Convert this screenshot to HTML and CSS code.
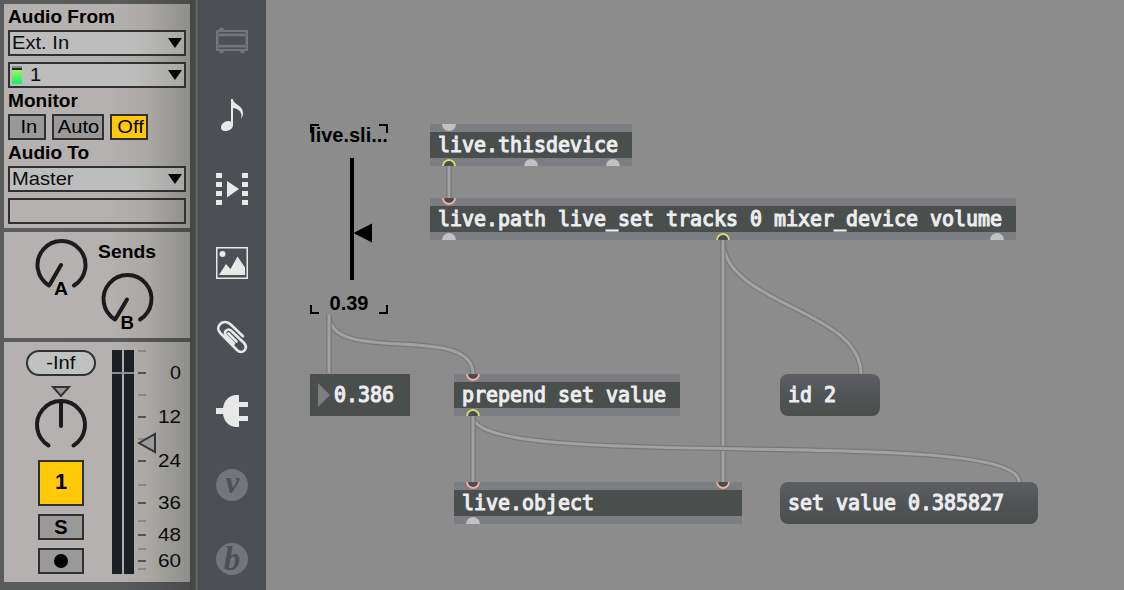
FILE: index.html
```html
<!DOCTYPE html>
<html lang="en">
<head>
<meta charset="utf-8">
<title>Live device patch</title>
<link rel="stylesheet" href="styles.css">
</head>
<body>
<div class="app">
  <aside class="track">
    <section class="panel routing">
      <h2 class="heading"><span class="wide-b">Audio From</span></h2>
      <div class="select"><span class="wide">Ext. In</span><i class="caret"></i></div>
      <div class="select second"><i class="level"></i><span class="wide">1</span><i class="caret"></i></div>
      <h2 class="heading"><span class="wide-b">Monitor</span></h2>
      <div class="monitor">
        <button class="toggle m-in"><span class="wide-c">In</span></button>
        <button class="toggle m-auto"><span class="wide-c">Auto</span></button>
        <button class="toggle m-off on"><span class="wide-c">Off</span></button>
      </div>
      <h2 class="heading"><span class="wide-b">Audio To</span></h2>
      <div class="select"><span class="wide">Master</span><i class="caret"></i></div>
      <div class="select second blank"></div>
    </section>
    <section class="panel sends">
      <svg width="186" height="106" viewBox="4 232 186 106">
        <g class="knob">
          <path d="M49 285.5A24 24 0 1 1 74 285.5M61 265L49.5 285"/>
          <path d="M115 319.5A24 24 0 1 1 140 319.5M127 299.5L115.500 319"/>
        </g>
        <g class="bold">
          <text x="98" y="257.500" textLength="58" lengthAdjust="spacingAndGlyphs">Sends</text>
          <text x="54" y="295" textLength="14" lengthAdjust="spacingAndGlyphs">A</text>
          <text x="120.500" y="329" textLength="13.500" lengthAdjust="spacingAndGlyphs">B</text>
        </g>
      </svg>
    </section>
    <section class="panel mixer">
      <div class="strip">
        <div class="volume"><span class="wide-c">-Inf</span></div>
        <svg class="pan" width="60" height="66" viewBox="31 384 60 66">
          <path class="mark" d="M53 387H69L61 396Z"/>
          <path class="knob" d="M48.500 445.500A24 24 0 1 1 73.500 445.500M61 402V426"/>
        </svg>
        <button class="toggle number on">1</button>
        <button class="toggle solo">S</button>
        <button class="toggle arm"><i class="dot"></i></button>
      </div>
      <svg class="meter" width="82" height="240" viewBox="108 342 82 240">
        <path class="bar" d="M112 350h10v224h-10zM124 350h10v224h-10z"/>
        <path class="zero" d="M112 373H134"/>
        <path class="minor" d="M138 351h8M138 395h8M138 439h8M138 485h8M138 521h8M138 549h8M138 569h8"/>
        <path class="major" d="M138 373h8M138 417h8M138 461h8M138 503h8M138 535h8M138 561h8"/>
        <path class="mark" d="M139 443L155 434V452Z"/>
        <g class="scale">
          <text x="170" y="379" textLength="11" lengthAdjust="spacingAndGlyphs">0</text>
          <text x="158" y="423" textLength="23" lengthAdjust="spacingAndGlyphs">12</text>
          <text x="158" y="467" textLength="23" lengthAdjust="spacingAndGlyphs">24</text>
          <text x="158" y="509" textLength="23" lengthAdjust="spacingAndGlyphs">36</text>
          <text x="158" y="541" textLength="23" lengthAdjust="spacingAndGlyphs">48</text>
          <text x="158" y="567" textLength="23" lengthAdjust="spacingAndGlyphs">60</text>
        </g>
      </svg>
    </section>
  </aside>

  <nav class="tools">
    <svg class="tool dim" viewBox="0 0 32 32"><path fill-rule="evenodd" d="M0 5H32V26H0ZM2.500 7V24H29.500V7Z"/><path d="M3 8.500H29V11.200H3ZM3 19.800H29V22.500H3Z"/><path d="M3 5.500a2.500 3 0 0 1 5 0zM3 25.500h5a2.500 3 0 0 1-5 0zM24 25.500h5a2.500 3 0 0 1-5 0z"/></svg>
    <svg class="tool" viewBox="0 0 32 32"><path d="M15 0H16.800C17.500 6 27 6 27 14C27 16 26.300 18 25 20C25.500 17 26 15 24 12.500C22.500 10.500 19 9 17 9V26C17 30 12.500 32 9 32C6 32 5 30.500 5 28.500C5 25 8.500 22 12 22C13.500 22 14.500 22.400 15 23Z"/></svg>
    <svg class="tool" viewBox="0 0 32 32"><path d="M0 0h6v5H0zM0 9h6v5H0zM0 18h6v5H0zM0 27h6v5H0zM26 0h6v5h-6zM26 9h6v5h-6zM26 18h6v5h-6zM26 27h6v5h-6zM11 8L23 16L11 24.500Z"/></svg>
    <svg class="tool" viewBox="0 0 32 32"><path fill-rule="evenodd" d="M0 0H32V32H0ZM1.500 1.500V30.500H30.500V1.500Z"/><circle cx="6.500" cy="7" r="3"/><path d="M3 28L10 17L14.500 22L21.500 9.500L29 20.500V28Z"/></svg>
    <svg class="tool" viewBox="0 0 32 32"><path class="clip" d="M27 15.300L15 3.700C11.500 .2 7 .2 4.200 3C1.500 5.500 1.500 9 4.300 12L21 29C23.500 31.500 26.500 31.300 28.500 29.300C30.500 27 30.300 24.500 28 22L15.500 10C13.500 8 11.500 8 10.200 9.500C8.500 11 8.800 13 10.500 15L18 22.500M12.500 12.500L20.500 20.500"/></svg>
    <svg class="tool" viewBox="0 0 32 32"><path d="M0 13H7C8 5 14 0 20 0H23V7H32V12H23V21H32V26H23V32H20C14 32 8 27 7 19H0Z"/></svg>
    <svg class="tool dim" viewBox="0 0 32 32"><circle cx="16" cy="16" r="16"/><text class="letter" x="16.500" y="24" font-size="31">v</text></svg>
    <svg class="tool dim" viewBox="0 0 32 32"><circle cx="16" cy="16" r="16"/><text class="letter" x="16" y="26.500" font-size="33">b</text></svg>
  </nav>

  <main class="canvas">
    <div class="slider">
      <span class="slider-name">live.sli...</span>
      <span class="slider-value">0.39</span>
      <svg width="80" height="190" viewBox="309 124 80 190">
        <path class="corner" d="M311 133V125H319M379 125H387V133M311 305V313H319M379 313H387V305"/>
        <path d="M350 158h4v122h-4zM353.500 233L372 223.500V242.500Z"/>
      </svg>
    </div>
    <div class="node obj n-device"><span class="code">live.thisdevice</span></div>
    <div class="node obj n-path"><span class="code">live.path live_set tracks 0 mixer_device volume</span></div>
    <div class="node num n-num"><i class="tri"></i><span class="code">0.386</span></div>
    <div class="node obj n-prepend"><span class="code">prepend set value</span></div>
    <div class="node msg n-id"><span class="code">id 2</span></div>
    <div class="node obj n-object"><span class="code">live.object</span></div>
    <div class="node msg n-set"><span class="code">set value 0.385827</span></div>
    <svg class="wires" width="858" height="590" viewBox="266 0 858 590">
      <defs>
        <path id="w1" d="M449 166V198"/>
        <path id="w2" d="M723 240C723 305 861 309 861 374"/>
        <path id="w3" d="M723 240V482"/>
        <path id="w4" d="M329 315C329 366 473 322 473 374"/>
        <path id="w5" d="M329 315V373"/>
        <path id="w6" d="M473 416C473 474 1019 424 1019 482"/>
        <path id="w7" d="M473 416V482"/>
        <path id="in" d="M-7 0A7 7 0 0 0 7 0Z"/>
        <path id="out" d="M-7 0A7 7 0 0 1 7 0Z"/>
        <g id="hot-in"><path class="hole" d="M-7 0A7 7 0 0 0 7 0Z"/><path class="pink" d="M-6 0A6 6 0 0 0 6 0"/></g>
        <g id="hot-out"><path class="hole" d="M-7 0A7 7 0 0 1 7 0Z"/><path class="lime" d="M-6 0A6 6 0 0 1 6 0"/></g>
      </defs>
      <use class="edge" href="#w4"/><use class="core" href="#w4"/>
      <use class="edge" href="#w5"/><use class="core" href="#w5"/>
      <use class="edge" href="#w2"/><use class="core" href="#w2"/>
      <use class="edge" href="#w3"/><use class="core" href="#w3"/>
      <use class="edge" href="#w6"/><use class="core" href="#w6"/>
      <use class="edge" href="#w7"/><use class="core" href="#w7"/>
      <use class="edge" href="#w1"/><use class="core" href="#w1"/>
      <g class="port">
        <use href="#in" x="449" y="124"/>
        <use href="#out" x="531" y="166"/><use href="#out" x="613" y="166"/>
        <use href="#out" x="449" y="240"/><use href="#out" x="997" y="240"/>
        <use href="#out" x="473" y="524"/>
      </g>
      <use href="#hot-out" x="449" y="166"/><use href="#hot-in" x="449" y="198"/>
      <use href="#hot-out" x="723" y="240"/><use href="#hot-in" x="723" y="482"/>
      <use href="#hot-in" x="473" y="374"/><use href="#hot-out" x="473" y="416"/>
      <use href="#hot-in" x="473" y="482"/>
    </svg>
  </main>
</div>
</body>
</html>
```
FILE: styles.css
```css
* { box-sizing: border-box; }
body { margin: 0; font-family: "Liberation Sans", Arial, sans-serif; font-size: 19px; color: #0c0c0c; }
svg { display: block; }
.app { display: grid; grid-template-columns: 198px 68px 858px; width: 1124px; height: 590px; overflow: hidden; }

/* Track strip */
.track { display: flex; flex-direction: column; gap: 4px; padding: 4px 8px 8px 4px; background: linear-gradient(90deg, transparent 190px, #474747 190px, #474747 195px, #666 196px, #5b5c5c 198px), linear-gradient(90deg, #5b5d5c, #5a5c5b 60%, #494949); }
.panel { background: linear-gradient(90deg, #b5b1b0 55%, #aaa7a5 78%, #8e8e8a 100%); }
.routing { height: 224px; padding: 0 4px; }
.sends { height: 106px; }
.mixer { height: 240px; display: flex; }
.heading { margin: 0; height: 26px; font-size: 18px; line-height: 27px; font-weight: bold; color: #000; white-space: nowrap; }
.wide, .wide-b, .wide-c { display: inline-block; transform: scaleX(1.06); transform-origin: left; }
.wide-c { transform-origin: center; }
.select { display: flex; align-items: center; height: 26px; padding: 0 2px; border: 2px solid #303030; background: linear-gradient(90deg, #bdbdbd 70%, #a9a9a6); line-height: 22px; }
.second { margin-top: 6px; }
.blank { background: none; }
.caret { margin-left: auto; border: 7px solid transparent; border-top: 10px solid #000; border-bottom: 0; }
.level { width: 10px; height: 18px; margin-right: 8px; background: linear-gradient(#888 0 2px, #1c242c 2px 4px, #a0f45c 4px, #12ee6c); }
.monitor { display: flex; gap: 6px; }
.toggle { display: flex; align-items: center; justify-content: center; height: 26px; padding: 0; border: 2px solid #303030; background: #999; font: inherit; color: #000; }
.toggle.on { background: #ffc90a; }
.m-in { width: 38px; padding-left: 3px; }
.m-auto { width: 52px; padding-left: 2px; }
.m-off { width: 38px; padding-left: 2px; }
.knob { fill: none; stroke: #1b1b1b; stroke-width: 4; stroke-linecap: round; stroke-linejoin: round; }
.bold { font-weight: bold; font-size: 18px; fill: #000; }
.strip { display: flex; flex-direction: column; align-items: center; width: 104px; padding: 8px 0 0 10px; }
.strip > * { flex: none; }
.volume { display: flex; align-items: center; justify-content: center; width: 70px; height: 26px; border: 2px solid #303030; border-radius: 13px; background: #c0c2c1; }
.pan { margin: 8px 0 10px; }
.mark { fill: #999; stroke: #333; stroke-width: 2; }
.number { width: 46px; height: 46px; padding-bottom: 2px; font-weight: bold; font-size: 22px; }
.solo, .arm { width: 46px; margin-top: 8px; font-weight: bold; font-size: 20px; }
.dot { width: 14px; height: 14px; border-radius: 50%; background: #000; }
.bar { fill: #1a2026; }
.zero { stroke: #8c8c8c; stroke-width: 2; }
.minor { stroke: #8a8989; stroke-width: 2; }
.major { stroke: #535353; stroke-width: 2; }
.scale { font-size: 19px; fill: #0c0c0c; }

/* Toolbar */
.tools { display: flex; flex-direction: column; align-items: center; gap: 42px; padding-top: 25px; background: #4c4f54; }
.tool { width: 32px; height: 32px; flex: none; fill: #e8e8e9; overflow: visible; }
.dim { fill: #73757a; }
.clip { fill: none; stroke: #e8e8e9; stroke-width: 2.6; stroke-linecap: round; }
.letter { fill: #4c4f54; font-family: "Liberation Serif", serif; font-weight: bold; font-style: italic; text-anchor: middle; }

/* Patch canvas */
.canvas { position: relative; background: #8c8c8c; }
.wires { position: absolute; inset: 0; }
.edge { fill: none; stroke: #797979; stroke-width: 5.500; }
.core { fill: none; stroke: #a2a2a2; stroke-width: 3; }
.port { fill: #c1c1c4; }
.hole { fill: #4a4d50; }
.pink { fill: none; stroke: #f5ad9f; stroke-width: 2; }
.lime { fill: none; stroke: #d8dc73; stroke-width: 2; }
.node { position: absolute; height: 42px; display: flex; align-items: center; padding-left: 8px; }
.obj { background: linear-gradient(#7d7e84 8px, #4a4e4c 8px 34px, #7d7e84 34px); }
.num { background: #4a4e4c; }
.msg { border-radius: 8px; background: linear-gradient(#5e5f64, #505455 50%, #4a4e4b); }
.code { flex: none; font: 22px/26px "DejaVu Sans Mono", monospace; color: #ececf0; -webkit-text-stroke: 1.2px #ececf0; white-space: pre; transform: scaleX(.906); transform-origin: left; }
.tri { flex: none; width: 12px; height: 24px; margin-right: 4px; background: #7d7e84; clip-path: polygon(0 0, 100% 50%, 0 100%); }
.n-device { left: 164px; top: 124px; width: 202px; }
.n-path { left: 164px; top: 198px; width: 586px; }
.n-num { left: 44px; top: 374px; width: 100px; }
.n-prepend { left: 188px; top: 374px; width: 226px; }
.n-id { left: 514px; top: 374px; width: 100px; }
.n-object { left: 188px; top: 482px; width: 288px; }
.n-set { left: 514px; top: 482px; width: 258px; }
.slider { position: absolute; left: 43px; top: 124px; width: 80px; height: 190px; font-weight: bold; font-size: 20px; color: #000; }
.slider-name, .slider-value { position: absolute; left: 0; width: 80px; line-height: 22px; text-align: center; }
.slider-name { top: 0; }
.slider-value { top: 168px; }
.corner { fill: none; stroke: #000; stroke-width: 2; }
```
